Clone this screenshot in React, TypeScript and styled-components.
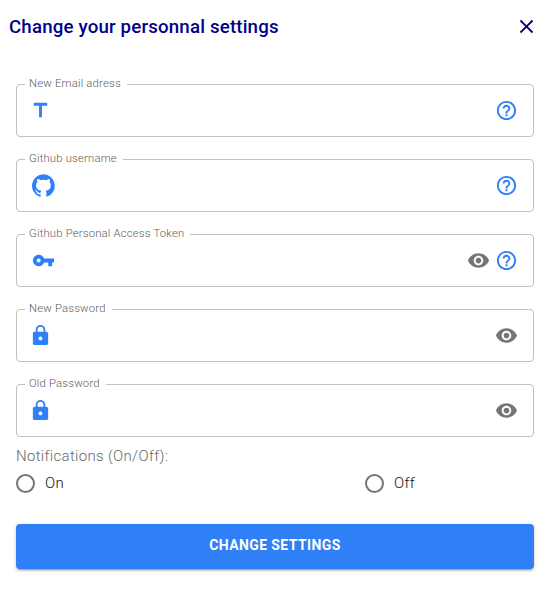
import React from "react";
import styled, { createGlobalStyle } from "styled-components";

const BLUE = "#2f80f7";

const GlobalStyle = createGlobalStyle`
  *, *::before, *::after { box-sizing: border-box; }
  body { margin: 0; background: #fff; font-family: Roboto, "Liberation Sans", sans-serif; }
`;

const Dialog = styled.main`
  height: 591px;
  padding: 14px 17px 0 16px;
  overflow: hidden;
`;

const Header = styled.header`
  display: flex;
  align-items: center;
  justify-content: space-between;
  height: 26px;
  margin: 0 -4px 38px -7px;
`;

const Title = styled.h1`
  margin: 0;
  color: #00008b;
  font-size: 18.7px;
  font-weight: 500;
  line-height: 26px;
  letter-spacing: 0.17px;
`;

const PlainButton = styled.button`
  display: flex;
  padding: 0;
  border: 0;
  background: none;
  color: inherit;
`;

const CloseButton = styled(PlainButton)`
  margin-bottom: 1px;
  color: #00008b;
`;

const Form = styled.form`
  display: flex;
  flex-direction: column;
`;

const Field = styled.fieldset`
  display: flex;
  min-width: 0;
  height: 59px;
  margin: 0 0 16px;
  padding: 0 8px;
  border: 1px solid #c0c0c0;
  border-radius: 4px;
`;

const Legend = styled.legend`
  height: 12px;
  padding: 0 6px 0 4px;
  color: #606060;
  font-size: 11.3px;
  font-weight: 300;
  line-height: 11px;
  letter-spacing: 0.19px;
  white-space: nowrap;
`;

const FieldBody = styled.div`
  display: flex;
  flex: 1;
  align-items: center;
  height: 41px;
`;

const Lead = styled.span<{ $inset: number }>`
  display: flex;
  margin-left: ${({ $inset }) => $inset}px;
  color: ${BLUE};
`;

const Input = styled.input`
  flex: 1;
  min-width: 0;
  border: 0;
  outline: 0;
  background: none;
  font: inherit;
`;

const Actions = styled.div`
  display: flex;
  gap: 5px;
  margin-right: 7px;
`;

const Action = styled(PlainButton)<{ $tone: "help" | "reveal" }>`
  color: ${({ $tone }) => ($tone === "help" ? BLUE : "#757575")};
`;

const GroupLabel = styled.div`
  height: 20px;
  margin-top: -7px;
  color: #686868;
  font-size: 15px;
  font-weight: 300;
  line-height: 20px;
  letter-spacing: 0.32px;
`;

const RadioRow = styled.div`
  display: grid;
  grid-template-columns: 349px 1fr;
  height: 24px;
  margin-top: 5px;
`;

const RadioLabel = styled.label`
  display: flex;
  align-items: center;
  gap: 10px;
  color: #111;
  font-size: 15px;
  font-weight: 300;
  line-height: 24px;
  letter-spacing: 0.3px;
`;

const Radio = styled.input`
  appearance: none;
  width: 19px;
  height: 19px;
  margin: 0;
  border: 2px solid #757575;
  border-radius: 50%;
`;

const Submit = styled.button`
  height: 45px;
  margin-top: 29px;
  padding: 0 0 3px;
  border: 0;
  border-radius: 4px;
  background: ${BLUE};
  box-shadow: 0 3px 1px -2px rgba(0,0,0,.2), 0 2px 2px 0 rgba(0,0,0,.14), 0 1px 5px 0 rgba(0,0,0,.12);
  color: #fff;
  font: 700 14px/24px Roboto, sans-serif;
  letter-spacing: 0.4px;
  text-transform: uppercase;
`;

const Svg = styled.svg`
  display: block;
  width: 23px;
  height: 23px;
  fill: currentColor;
`;

const paths = {
  close: "M19 6.41L17.59 5 12 10.59 6.41 5 5 6.41 10.59 12 5 17.59 6.41 19 12 13.41 17.59 19 19 17.59 13.41 12z",
  title: "M5 4v3h5.5v12h3V7H19V4z",
  github:
    "M12 .3a12 12 0 0 0-3.8 23.4c.6.1.8-.3.8-.6v-2c-3.3.7-4-1.6-4-1.6-.6-1.4-1.4-1.8-1.4-1.8-1-.7.1-.7.1-.7 1.2 0 1.9 1.2 1.9 1.2 1 1.8 2.8 1.3 3.5 1 0-.8.4-1.3.7-1.7-2.7-.3-5.5-1.3-5.5-6 0-1.2.5-2.3 1.3-3.1-.2-.4-.6-1.6 0-3.2 0 0 1-.3 3.4 1.2a11.5 11.5 0 0 1 6 0c2.3-1.5 3.3-1.2 3.3-1.2.6 1.6.2 2.8 0 3.2.9.8 1.3 1.9 1.3 3.2 0 4.6-2.8 5.6-5.5 5.9.5.4.9 1 .9 2.2v3.3c0 .3.1.7.8.6A12 12 0 0 0 12 .3",
  key: "M12.65 10C11.83 7.67 9.61 6 7 6c-3.31 0-6 2.69-6 6s2.69 6 6 6c2.61 0 4.83-1.67 5.65-4H17v4h4v-4h2v-4H12.65zM7 14c-1.1 0-2-.9-2-2s.9-2 2-2 2 .9 2 2-.9 2-2 2z",
  lock: "M18 8h-1V6c0-2.76-2.24-5-5-5S7 3.24 7 6v2H6c-1.1 0-2 .9-2 2v10c0 1.1.9 2 2 2h12c1.1 0 2-.9 2-2V10c0-1.1-.9-2-2-2zm-6 9c-1.1 0-2-.9-2-2s.9-2 2-2 2 .9 2 2-.9 2-2 2zm3.1-9H8.9V6c0-1.71 1.39-3.1 3.1-3.1 1.71 0 3.1 1.39 3.1 3.1v2z",
  help: "M11 18h2v-2h-2v2zm1-16C6.48 2 2 6.48 2 12s4.48 10 10 10 10-4.48 10-10S17.52 2 12 2zm0 18c-4.41 0-8-3.59-8-8s3.59-8 8-8 8 3.59 8 8-3.59 8-8 8zm0-14c-2.21 0-4 1.79-4 4h2c0-1.1.9-2 2-2s2 .9 2 2c0 2-3 1.75-3 5h2c0-2.25 3-2.5 3-5 0-2.21-1.79-4-4-4z",
  reveal:
    "M12 4.5C7 4.5 2.73 7.61 1 12c1.73 4.39 6 7.5 11 7.5s9.27-3.11 11-7.5c-1.73-4.39-6-7.5-11-7.5zM12 17c-2.76 0-5-2.24-5-5s2.24-5 5-5 5 2.24 5 5-2.24 5-5 5zm0-8c-1.66 0-3 1.34-3 3s1.34 3 3 3 3-1.34 3-3-1.34-3-3-3z",
};

type IconName = keyof typeof paths;

const Icon = ({ name }: { name: IconName }) => (
  <Svg viewBox="0 0 24 24" aria-hidden="true">
    <path d={paths[name]} />
  </Svg>
);

const fields: {
  label: string;
  icon: IconName;
  inset: number;
  type: string;
  actions: ("help" | "reveal")[];
}[] = [
  { label: "New Email adress", icon: "title", inset: 4, type: "email", actions: ["help"] },
  { label: "Github username", icon: "github", inset: 7, type: "text", actions: ["help"] },
  { label: "Github Personal Access Token", icon: "key", inset: 7, type: "password", actions: ["reveal", "help"] },
  { label: "New Password", icon: "lock", inset: 4, type: "password", actions: ["reveal"] },
  { label: "Old Password", icon: "lock", inset: 4, type: "password", actions: ["reveal"] },
];

export default function App() {
  return (
    <>
      <GlobalStyle />
      <Dialog>
        <Header>
          <Title>Change your personnal settings</Title>
          <CloseButton type="button" aria-label="Close">
            <Icon name="close" />
          </CloseButton>
        </Header>
        <Form>
          {fields.map((f) => (
            <Field key={f.label}>
              <Legend>{f.label}</Legend>
              <FieldBody>
                <Lead $inset={f.inset}>
                  <Icon name={f.icon} />
                </Lead>
                <Input type={f.type} aria-label={f.label} />
                <Actions>
                  {f.actions.map((a) => (
                    <Action key={a} type="button" $tone={a} aria-label={a}>
                      <Icon name={a} />
                    </Action>
                  ))}
                </Actions>
              </FieldBody>
            </Field>
          ))}
          <GroupLabel>Notifications (On/Off):</GroupLabel>
          <RadioRow>
            {["On", "Off"].map((option) => (
              <RadioLabel key={option}>
                <Radio type="radio" name="notifications" value={option} />
                {option}
              </RadioLabel>
            ))}
          </RadioRow>
          <Submit type="button">Change settings</Submit>
        </Form>
      </Dialog>
    </>
  );
}
